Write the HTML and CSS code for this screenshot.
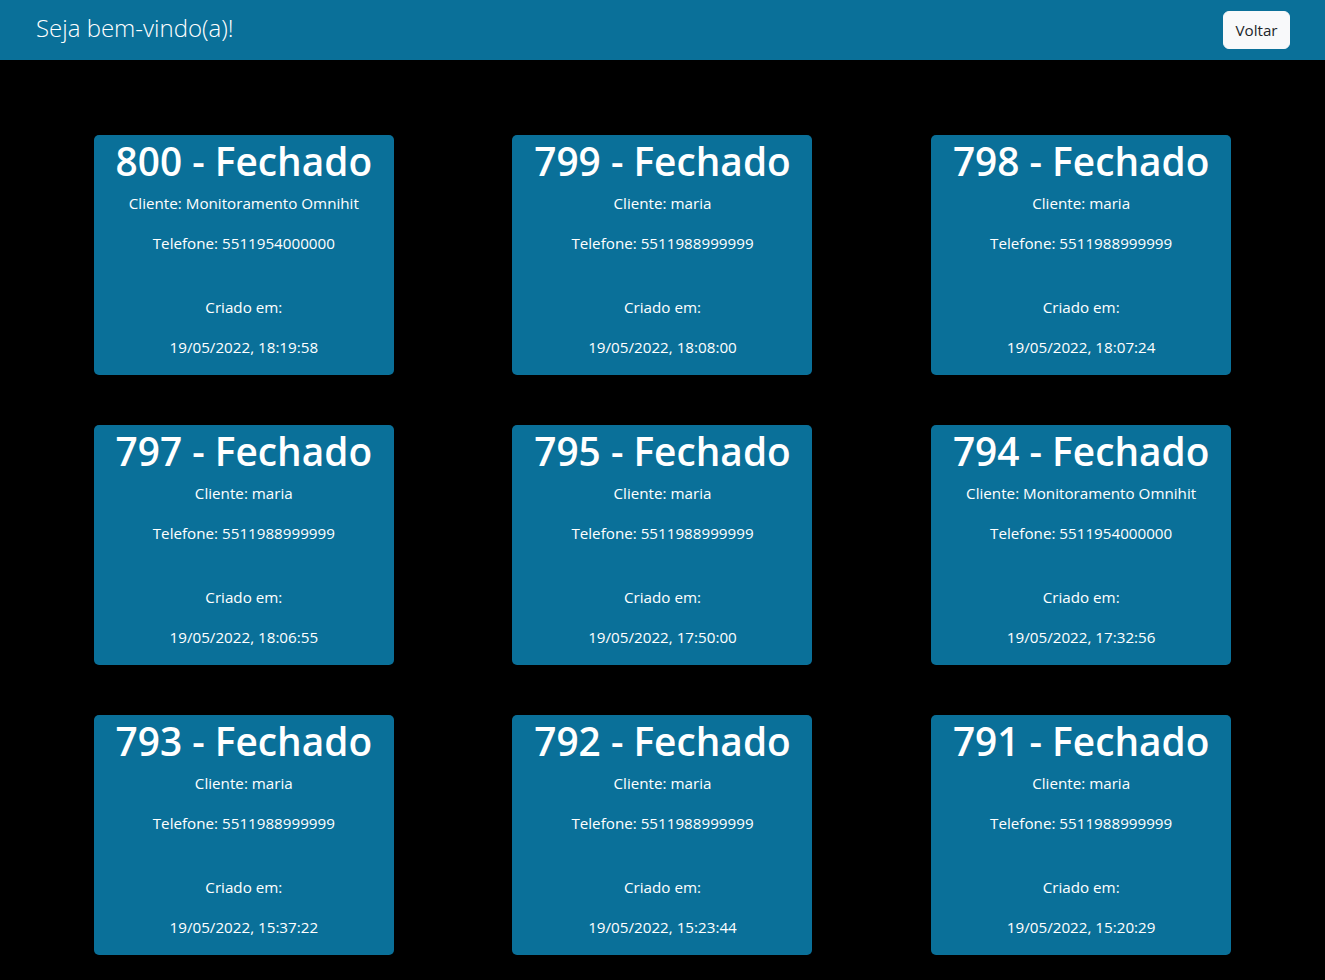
FILE: index.html
```html
<!DOCTYPE html>
<html lang="pt-BR">
<head>
<meta charset="utf-8">
<title>Chamados</title>
<link rel="stylesheet" href="styles.css">
</head>
<body>
<header class="topbar">
  <span class="brand">Seja bem-vindo(a)!</span>
  <button class="btn-back" type="button">Voltar</button>
</header>
<main class="grid">
  <div class="card">
    <h1 class="card-title">800 - Fechado</h1>
    <p class="line">Cliente: Monitoramento Omnihit</p>
    <p class="line">Telefone: 5511954000000</p>
    <div class="gap"></div>
    <p class="line">Criado em:</p>
    <p class="line">19/05/2022, 18:19:58</p>
  </div>
  <div class="card">
    <h1 class="card-title">799 - Fechado</h1>
    <p class="line">Cliente: maria</p>
    <p class="line">Telefone: 5511988999999</p>
    <div class="gap"></div>
    <p class="line">Criado em:</p>
    <p class="line">19/05/2022, 18:08:00</p>
  </div>
  <div class="card">
    <h1 class="card-title">798 - Fechado</h1>
    <p class="line">Cliente: maria</p>
    <p class="line">Telefone: 5511988999999</p>
    <div class="gap"></div>
    <p class="line">Criado em:</p>
    <p class="line">19/05/2022, 18:07:24</p>
  </div>
  <div class="card">
    <h1 class="card-title">797 - Fechado</h1>
    <p class="line">Cliente: maria</p>
    <p class="line">Telefone: 5511988999999</p>
    <div class="gap"></div>
    <p class="line">Criado em:</p>
    <p class="line">19/05/2022, 18:06:55</p>
  </div>
  <div class="card">
    <h1 class="card-title">795 - Fechado</h1>
    <p class="line">Cliente: maria</p>
    <p class="line">Telefone: 5511988999999</p>
    <div class="gap"></div>
    <p class="line">Criado em:</p>
    <p class="line">19/05/2022, 17:50:00</p>
  </div>
  <div class="card">
    <h1 class="card-title">794 - Fechado</h1>
    <p class="line">Cliente: Monitoramento Omnihit</p>
    <p class="line">Telefone: 5511954000000</p>
    <div class="gap"></div>
    <p class="line">Criado em:</p>
    <p class="line">19/05/2022, 17:32:56</p>
  </div>
  <div class="card">
    <h1 class="card-title">793 - Fechado</h1>
    <p class="line">Cliente: maria</p>
    <p class="line">Telefone: 5511988999999</p>
    <div class="gap"></div>
    <p class="line">Criado em:</p>
    <p class="line">19/05/2022, 15:37:22</p>
  </div>
  <div class="card">
    <h1 class="card-title">792 - Fechado</h1>
    <p class="line">Cliente: maria</p>
    <p class="line">Telefone: 5511988999999</p>
    <div class="gap"></div>
    <p class="line">Criado em:</p>
    <p class="line">19/05/2022, 15:23:44</p>
  </div>
  <div class="card">
    <h1 class="card-title">791 - Fechado</h1>
    <p class="line">Cliente: maria</p>
    <p class="line">Telefone: 5511988999999</p>
    <div class="gap"></div>
    <p class="line">Criado em:</p>
    <p class="line">19/05/2022, 15:20:29</p>
  </div>
</main>
</body>
</html>
```
FILE: styles.css
```css
* { box-sizing: border-box; }

html, body {
  margin: 0;
  background: #000;
  font-family: "Open Sans", "Noto Sans", sans-serif;
  color: #fff;
}

.topbar {
  height: 60px;
  background: #0a7099;
  display: flex;
  align-items: center;
  justify-content: space-between;
  padding: 0 35px 0 36px;
}

.brand {
  font-size: 24px;
  font-weight: 300;
  line-height: 30px;
  color: #fff;
  padding-bottom: 5px;
}

.btn-back {
  height: 38px;
  width: 67px;
  padding: 0;
  border: 1px solid #f8f9fa;
  border-radius: 6px;
  background: #f8f9fa;
  color: #212529;
  font-family: "Open Sans", "Noto Sans", sans-serif;
  font-size: 15.2px;
  line-height: 24px;
  margin-bottom: 1px;
}

.grid {
  width: 1256px;
  margin: 0 auto;
  padding-top: 75px;
  padding-bottom: 25px;
  display: grid;
  grid-template-columns: repeat(3, 1fr);
  row-gap: 50px;
  justify-items: center;
}

.card {
  width: 300px;
  background: #0a7099;
  border-radius: 5px;
  text-align: center;
}

.card-title {
  margin: 0 0 6px;
  padding-top: 2px;
  font-size: 38.8px;
  font-weight: 600;
  line-height: 48px;
}

.line {
  margin: 0 0 16px;
  font-size: 15.2px;
  line-height: 24px;
}

.gap {
  height: 24px;
}
```
